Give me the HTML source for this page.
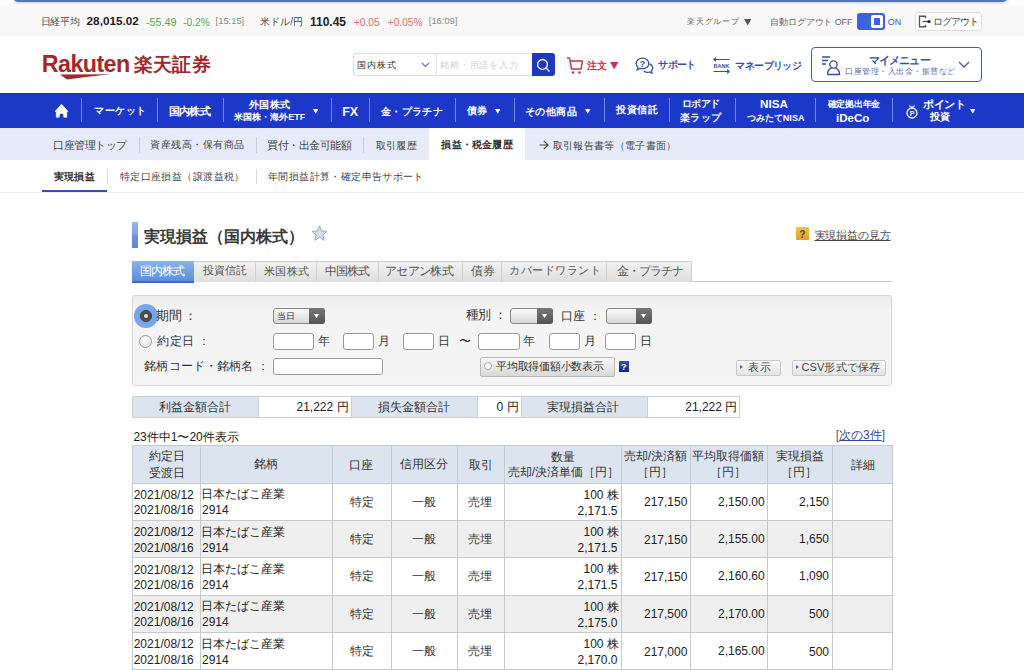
<!DOCTYPE html>
<html lang="ja">
<head>
<meta charset="utf-8">
<title>実現損益</title>
<style>
*{box-sizing:border-box;margin:0;padding:0}
html,body{width:1024px;height:670px;overflow:hidden;background:#fff;font-family:"Liberation Sans",sans-serif;color:#333;position:relative}
.t{position:absolute;white-space:nowrap}
.r{position:absolute}
</style>
</head>
<body>
<div class="r" style="left:0px;top:0px;width:1024px;height:36.5px;background:linear-gradient(#fdfdfd 3px,#f8f8f8 9px,#f8f8f8 34px,#fcfcfc)"></div>
<div class="r" style="left:13.5px;top:-7px;width:995px;height:9px;background:#5573bb;border-radius:0 0 7px 4px;box-shadow:0 1px 3px rgba(80,110,180,.35)"></div>
<div class="t" style="left:40.70px;top:16.30px;font-size:10px;line-height:12px;color:#444;;letter-spacing:-0.30px">日経平均</div>
<div class="t" style="left:86.60px;top:13.30px;font-size:11.73px;line-height:15px;color:#222;font-weight:bold;">28,015.02</div>
<div class="t" style="left:145.90px;top:15.80px;font-size:10.78px;line-height:13px;color:#5aa34a;">-55.49</div>
<div class="t" style="left:183.20px;top:15.80px;font-size:10.19px;line-height:13px;color:#5aa34a;">-0.2%</div>
<div class="t" style="left:215.60px;top:15.30px;font-size:9.35px;line-height:12px;color:#888;">[15:15]</div>
<div class="t" style="left:260.00px;top:16.30px;font-size:10px;line-height:12px;color:#444;;letter-spacing:0.12px">米ドル/円</div>
<div class="t" style="left:310.00px;top:15.30px;font-size:12.0px;line-height:15px;color:#222;font-weight:bold;">110.45</div>
<div class="t" style="left:353.70px;top:15.80px;font-size:10.34px;line-height:13px;color:#e06a70;">+0.05</div>
<div class="t" style="left:387.80px;top:15.80px;font-size:10.15px;line-height:13px;color:#e06a70;">+0.05%</div>
<div class="t" style="left:428.80px;top:15.30px;font-size:9.35px;line-height:12px;color:#888;">[16:09]</div>
<div class="t" style="left:686.90px;top:17.30px;font-size:8px;line-height:10px;color:#666;;letter-spacing:0.82px">楽天グループ</div>
<svg class="r" style="left:743.5px;top:18.6125px" width="7.5" height="6.375" viewBox="0 0 7.5 6.375"><path d="M0 0H7.5L3.75 6.375Z" fill="#555"/></svg>
<div class="t" style="left:770.00px;top:16.80px;font-size:9px;line-height:11px;color:#666;;letter-spacing:-0.10px">自動ログアウト OFF</div>
<div class="r" style="left:856.5px;top:13px;width:28.5px;height:16.5px;background:#3c63dd;border-radius:3px"></div>
<div class="r" style="left:870.5px;top:15px;width:12.5px;height:12.5px;background:#fff;border-radius:2px"></div>
<div class="r" style="left:873.5px;top:18px;width:6.5px;height:6.5px;background:#3c63dd"></div>
<div class="t" style="left:887.80px;top:16.80px;font-size:8.89px;line-height:11px;color:#3c5ab8;">ON</div>
<div class="r" style="left:915px;top:12.3px;width:67px;height:19px;background:#fff;border:1px solid #dcdcdc;border-radius:3px"></div>
<svg class="r" style="left:918px;top:15px" width="14" height="13" viewBox="0 0 14 13"><path d="M7.5 3.2V1.2H1.5V11.8H7.5V9.8" fill="none" stroke="#555" stroke-width="1.4"/><path d="M4.5 6.5H10" fill="none" stroke="#555" stroke-width="1.4"/><circle cx="11" cy="6.5" r="1.6" fill="#222"/></svg>
<div class="t" style="left:932.70px;top:15.85px;font-size:10px;line-height:12px;color:#444;;letter-spacing:-0.90px">ログアウト</div>
<div class="t" style="left:41.80px;top:50.40px;font-size:23.32px;line-height:29px;color:#a0292c;font-weight:bold;letter-spacing:-0.6px">Rakuten</div>
<svg class="r" style="left:58px;top:72.5px" width="56" height="7" viewBox="0 0 56 7"><path d="M2 1.5 L52 1.2 Q30 3.5 9 6.5 Z" fill="#a0292c"/></svg>
<div class="t" style="left:133.60px;top:52.50px;font-size:19px;line-height:24px;color:#a0292c;font-weight:bold;;letter-spacing:0.40px">楽天証券</div>
<div class="r" style="left:353px;top:53px;width:84px;height:23px;background:#fff;border:1px solid #dedede;border-right:none;border-radius:3px 0 0 3px"></div>
<div class="t" style="left:357.00px;top:60.00px;font-size:9px;line-height:11px;color:#333;;letter-spacing:0.87px">国内株式</div>
<svg class="r" style="left:421px;top:62px" width="9" height="6" viewBox="0 0 9 6"><path d="M1 1L4.5 4.5L8 1" fill="none" stroke="#6878a8" stroke-width="1.2"/></svg>
<div class="r" style="left:436px;top:53px;width:96px;height:23px;background:#fff;border:1px solid #dedede;border-right:none"></div>
<div class="r" style="left:436px;top:54px;width:1px;height:21px;background:#e4e4e4"></div>
<div class="t" style="left:440.00px;top:59.50px;font-size:9px;line-height:11px;color:#d0d0d0;;letter-spacing:0.86px">銘柄・用語を入力</div>
<div class="r" style="left:531.5px;top:53.2px;width:23.5px;height:23.2px;background:#1e38c0;border-radius:0 3px 3px 0"></div>
<svg class="r" style="left:535px;top:56px" width="17" height="17" viewBox="0 0 17 17"><circle cx="7.5" cy="8.4" r="4.9" fill="none" stroke="#fff" stroke-width="1.3"/><path d="M11 12L14 15" stroke="#fff" stroke-width="1.4" stroke-linecap="round"/></svg>
<svg class="r" style="left:566px;top:56px" width="18" height="19" viewBox="0 0 18 19"><path d="M1 2H3.5L5.5 13H15L16.5 5H4.5" fill="none" stroke="#c8304f" stroke-width="1.4" stroke-linejoin="round"/><circle cx="7" cy="16.5" r="1.3" fill="#c8304f"/><circle cx="13.5" cy="16.5" r="1.3" fill="#c8304f"/></svg>
<div class="t" style="left:587.00px;top:60.00px;font-size:10px;line-height:12px;color:#c8304f;font-weight:bold;">注文</div>
<svg class="r" style="left:610px;top:61.8875px" width="8.5" height="7.225" viewBox="0 0 8.5 7.225"><path d="M0 0H8.5L4.25 7.225Z" fill="#c8304f"/></svg>
<svg class="r" style="left:635px;top:57px" width="19" height="17" viewBox="0 0 19 17"><path d="M7.5 1.2C3.8 1.2 1.2 3.6 1.2 6.5C1.2 8 1.8 9.2 3 10.2L2.2 12.8L5.3 11.4C6 11.7 6.7 11.8 7.5 11.8C11.2 11.8 13.8 9.4 13.8 6.5C13.8 3.6 11.2 1.2 7.5 1.2Z" fill="none" stroke="#3a4ea0" stroke-width="1.3"/><path d="M14.5 6.8C16.6 7.6 17.8 9.2 17.8 11C17.8 12.2 17.2 13.2 16.3 14L16.9 16.1L14.4 15C12.6 15.6 10.3 15.2 8.9 14" fill="none" stroke="#3a4ea0" stroke-width="1.3"/><text x="7.5" y="9.8" font-size="9.5" font-weight="bold" text-anchor="middle" fill="#3a4ea0" font-family="Liberation Sans">?</text></svg>
<div class="t" style="left:658.20px;top:59.00px;font-size:10px;line-height:12px;color:#3a4ea0;font-weight:bold;;letter-spacing:-0.63px">サポート</div>
<svg class="r" style="left:712px;top:57px" width="19" height="17" viewBox="0 0 19 17"><path d="M1.5 2.5H17.5M1.5 2.5L4 0.8M1.5 2.5L4 4.2" fill="none" stroke="#3a4ea0" stroke-width="1.2"/><path d="M1.5 14.5H17.5M17.5 14.5L15 12.8M17.5 14.5L15 16.2" fill="none" stroke="#3a4ea0" stroke-width="1.2"/><text x="9.5" y="10.8" font-size="5.5" font-weight="bold" text-anchor="middle" fill="#3a4ea0" font-family="Liberation Sans">BANK</text></svg>
<div class="t" style="left:735.40px;top:59.50px;font-size:10px;line-height:12px;color:#3a4ea0;font-weight:bold;;letter-spacing:-0.60px">マネーブリッジ</div>
<div class="r" style="left:811.3px;top:47.4px;width:171px;height:34.6px;border:1.5px solid #4c5c9c;border-radius:4px;background:#fff"></div>
<svg class="r" style="left:821px;top:55px" width="20" height="21" viewBox="0 0 20 21"><path d="M1 2H9M1 5.5H7M1 9H5" stroke="#3a4ea0" stroke-width="1.4"/><circle cx="12.5" cy="9.5" r="3.6" fill="none" stroke="#3a4ea0" stroke-width="1.4"/><path d="M6.5 19.5C6.5 15.5 8.5 13.8 10.5 13.2M14.5 13.2C16.5 13.8 18.5 15.5 18.5 19.5H6.5" fill="none" stroke="#3a4ea0" stroke-width="1.4"/></svg>
<div class="t" style="left:868.50px;top:52.80px;font-size:11px;line-height:14px;color:#3a4ea0;font-weight:bold;letter-spacing:-0.8px">マイメニュー</div>
<div class="t" style="left:845.00px;top:67.00px;font-size:8px;line-height:10px;color:#5666a8;letter-spacing:0.5px">口座管理・入出金・振替など</div>
<svg class="r" style="left:958px;top:61px" width="12" height="8" viewBox="0 0 12 8"><path d="M1 1L6 6L11 1" fill="none" stroke="#4c5c9c" stroke-width="1.3"/></svg>
<div class="r" style="left:0px;top:93px;width:1024px;height:35px;background:#1c38c8"></div>
<div class="r" style="left:0px;top:93px;width:1024px;height:1px;background:#1b30a8"></div>
<div class="r" style="left:81px;top:98px;width:1px;height:24px;background:#6f88f0"></div>
<div class="r" style="left:157px;top:98px;width:1px;height:24px;background:#6f88f0"></div>
<div class="r" style="left:222.5px;top:98px;width:1px;height:24px;background:#6f88f0"></div>
<div class="r" style="left:331px;top:98px;width:1px;height:24px;background:#6f88f0"></div>
<div class="r" style="left:369px;top:98px;width:1px;height:24px;background:#6f88f0"></div>
<div class="r" style="left:455px;top:98px;width:1px;height:24px;background:#6f88f0"></div>
<div class="r" style="left:513.5px;top:98px;width:1px;height:24px;background:#6f88f0"></div>
<div class="r" style="left:603.5px;top:98px;width:1px;height:24px;background:#6f88f0"></div>
<div class="r" style="left:669px;top:98px;width:1px;height:24px;background:#6f88f0"></div>
<div class="r" style="left:734.5px;top:98px;width:1px;height:24px;background:#6f88f0"></div>
<div class="r" style="left:815px;top:98px;width:1px;height:24px;background:#6f88f0"></div>
<div class="r" style="left:891.5px;top:98px;width:1px;height:24px;background:#6f88f0"></div>
<svg class="r" style="left:54px;top:103px" width="16" height="16" viewBox="0 0 16 16"><path d="M7.5 1.2L1 8.5H2.3V14.2H5.3V12.4A2.2 2.2 0 0 1 9.7 12.4V14.2H12.8V8.5H14.1Z" fill="#fff" stroke="#fff" stroke-width="0.6" stroke-linejoin="round"/></svg>
<div class="t" style="left:94.20px;top:105.40px;font-size:10px;line-height:12px;color:#fff;font-weight:bold;;letter-spacing:0.45px">マーケット</div>
<div class="t" style="left:168.80px;top:103.90px;font-size:11px;line-height:14px;color:#fff;font-weight:bold;;letter-spacing:-0.67px">国内株式</div>
<div class="t" style="left:248.90px;top:98.50px;font-size:10px;line-height:12px;color:#fff;font-weight:bold;;letter-spacing:0.53px">外国株式</div>
<div class="t" style="left:234.30px;top:112.40px;font-size:9px;line-height:11px;color:#fff;font-weight:bold;;letter-spacing:-0.01px">米国株・海外ETF</div>
<svg class="r" style="left:312.5px;top:109.1625px" width="5.5" height="4.675" viewBox="0 0 5.5 4.675"><path d="M0 0H5.5L2.75 4.675Z" fill="#fff"/></svg>
<div class="t" style="left:342.20px;top:103.90px;font-size:12.58px;line-height:16px;color:#fff;font-weight:bold;">FX</div>
<div class="t" style="left:380.70px;top:106.40px;font-size:10px;line-height:12px;color:#fff;font-weight:bold;;letter-spacing:0.42px">金・プラチナ</div>
<div class="t" style="left:467.00px;top:105.40px;font-size:10px;line-height:12px;color:#fff;font-weight:bold;;letter-spacing:0.30px">債券</div>
<svg class="r" style="left:495.3px;top:109.1625px" width="5.5" height="4.675" viewBox="0 0 5.5 4.675"><path d="M0 0H5.5L2.75 4.675Z" fill="#fff"/></svg>
<div class="t" style="left:524.70px;top:105.90px;font-size:10px;line-height:12px;color:#fff;font-weight:bold;;letter-spacing:0.57px">その他商品</div>
<svg class="r" style="left:585.3px;top:109.1625px" width="5.5" height="4.675" viewBox="0 0 5.5 4.675"><path d="M0 0H5.5L2.75 4.675Z" fill="#fff"/></svg>
<div class="t" style="left:616.40px;top:103.80px;font-size:10px;line-height:12px;color:#fff;font-weight:bold;;letter-spacing:0.47px">投資信託</div>
<div class="t" style="left:682.00px;top:98.20px;font-size:10px;line-height:12px;color:#fff;font-weight:bold;;letter-spacing:-0.67px">ロボアド</div>
<div class="t" style="left:680.00px;top:111.80px;font-size:10px;line-height:12px;color:#fff;font-weight:bold;;letter-spacing:0.30px">楽ラップ</div>
<div class="t" style="left:760.00px;top:95.70px;font-size:11.7px;line-height:15px;color:#fff;font-weight:bold;">NISA</div>
<div class="t" style="left:746.50px;top:112.70px;font-size:9px;line-height:11px;color:#fff;font-weight:bold;;letter-spacing:0.07px">つみたてNISA</div>
<div class="t" style="left:827.70px;top:99.20px;font-size:9px;line-height:11px;color:#fff;font-weight:bold;;letter-spacing:-0.24px">確定拠出年金</div>
<div class="t" style="left:836.00px;top:110.50px;font-size:11.56px;line-height:14px;color:#fff;font-weight:bold;">iDeCo</div>
<svg class="r" style="left:905px;top:104px" width="14" height="15" viewBox="0 0 14 15"><path d="M4.5 1.5L7 4L9.5 1.5" fill="none" stroke="#fff" stroke-width="1.2"/><circle cx="7" cy="9" r="5" fill="none" stroke="#fff" stroke-width="1.3"/><text x="7" y="11.5" font-size="7" font-weight="bold" text-anchor="middle" fill="#fff" font-family="Liberation Sans">P</text></svg>
<div class="t" style="left:923.40px;top:97.10px;font-size:11px;line-height:14px;color:#fff;font-weight:bold;;letter-spacing:-0.47px">ポイント</div>
<div class="t" style="left:930.40px;top:111.20px;font-size:10px;line-height:12px;color:#fff;font-weight:bold;">投資</div>
<svg class="r" style="left:969.5px;top:109.1625px" width="5.5" height="4.675" viewBox="0 0 5.5 4.675"><path d="M0 0H5.5L2.75 4.675Z" fill="#fff"/></svg>
<div class="r" style="left:0px;top:128px;width:1024px;height:32px;background:#e6eaf9"></div>
<div class="r" style="left:429px;top:128px;width:96px;height:32px;background:#fff"></div>
<div class="r" style="left:138.5px;top:137px;width:1px;height:16px;background:#c8cede"></div>
<div class="r" style="left:255.5px;top:137px;width:1px;height:16px;background:#c8cede"></div>
<div class="r" style="left:362.5px;top:137px;width:1px;height:16px;background:#c8cede"></div>
<div class="t" style="left:53.00px;top:138.30px;font-size:11px;line-height:14px;color:#444;;letter-spacing:-0.50px">口座管理トップ</div>
<div class="t" style="left:150.00px;top:139.30px;font-size:10px;line-height:12px;color:#444;;letter-spacing:0.50px">資産残高・保有商品</div>
<div class="t" style="left:267.00px;top:137.80px;font-size:11px;line-height:14px;color:#444;;letter-spacing:-0.43px">買付・出金可能額</div>
<div class="t" style="left:375.90px;top:139.80px;font-size:10px;line-height:12px;color:#444;;letter-spacing:0.27px">取引履歴</div>
<div class="t" style="left:441.30px;top:139.30px;font-size:10px;line-height:12px;color:#333;font-weight:bold;;letter-spacing:0.23px">損益・税金履歴</div>
<svg class="r" style="left:539px;top:139.5px" width="10" height="10" viewBox="0 0 10 10"><path d="M0.5 5H9M4.8 0.8L9 5L4.8 9.2" fill="none" stroke="#444" stroke-width="1.2"/></svg>
<div class="t" style="left:552.60px;top:139.80px;font-size:10px;line-height:12px;color:#444;;letter-spacing:0.35px">取引報告書等（電子書面）</div>
<div class="r" style="left:0px;top:192px;width:1024px;height:1px;background:#ececec"></div>
<div class="r" style="left:41.5px;top:190.3px;width:65.6px;height:2.2px;background:#3a4fa8"></div>
<div class="r" style="left:106.5px;top:169px;width:1px;height:15px;background:#d8d8d8"></div>
<div class="r" style="left:255.5px;top:169px;width:1px;height:15px;background:#d8d8d8"></div>
<div class="t" style="left:54.00px;top:170.75px;font-size:10px;line-height:12px;color:#333;font-weight:bold;;letter-spacing:0.23px">実現損益</div>
<div class="t" style="left:119.70px;top:170.75px;font-size:10px;line-height:12px;color:#444;;letter-spacing:0.43px">特定口座損益（譲渡益税）</div>
<div class="t" style="left:268.00px;top:170.75px;font-size:10px;line-height:12px;color:#444;;letter-spacing:0.39px">年間損益計算・確定申告サポート</div>
<div class="r" style="left:132px;top:222px;width:5.8px;height:25.8px;background:linear-gradient(#93b5e8,#80a6de 48%,#6c95d7 52%,#5d87cf)"></div>
<div class="t" style="left:143.90px;top:226.80px;font-size:16px;line-height:20px;color:#3a3a3a;font-weight:bold;;letter-spacing:-0.03px">実現損益（国内株式）</div>
<svg class="r" style="left:311px;top:225px" width="17" height="17" viewBox="0 0 17 17"><path d="M8.5 1L10.7 6.1L16 6.4L11.9 9.9L13.2 15.3L8.5 12.4L3.8 15.3L5.1 9.9L1 6.4L6.3 6.1Z" fill="#d7dfe8" stroke="#9aaabd" stroke-width="1"/></svg>
<div class="r" style="left:796px;top:227.3px;width:13.4px;height:12.5px;background:linear-gradient(#f5c24a,#e2a020);border-radius:1px"></div>
<div class="t" style="left:799.20px;top:228.50px;font-size:10px;line-height:12px;color:#444;font-weight:bold;">?</div>
<div class="t" style="left:814.50px;top:228.30px;font-size:11px;line-height:14px;color:#444;text-decoration:underline;letter-spacing:-0.15px">実現損益の見方</div>
<div class="r" style="left:132px;top:281px;width:760px;height:1px;background:#c8c8c8"></div>
<div class="r" style="left:132px;top:260.5px;width:62px;height:22px;background:linear-gradient(#8ab4ea,#5a8fd8);border-bottom:2px solid #3f6cb8"></div>
<div class="t" style="left:140.00px;top:263.90px;font-size:12px;line-height:15px;color:#fff;;letter-spacing:-1.00px">国内株式</div>
<div class="r" style="left:194px;top:260.5px;width:61.5px;height:21px;background:linear-gradient(#f2f2f2,#dedede);border:1px solid #d0d0d0;border-left:none;border-bottom:none"></div>
<div class="t" style="left:202.80px;top:263.40px;font-size:11px;line-height:14px;color:#555;;letter-spacing:0.07px">投資信託</div>
<div class="r" style="left:255.5px;top:260.5px;width:61.5px;height:21px;background:linear-gradient(#f2f2f2,#dedede);border:1px solid #d0d0d0;border-left:none;border-bottom:none"></div>
<div class="t" style="left:264.20px;top:263.90px;font-size:11px;line-height:14px;color:#555;;letter-spacing:0.17px">米国株式</div>
<div class="r" style="left:317px;top:260.5px;width:61.5px;height:21px;background:linear-gradient(#f2f2f2,#dedede);border:1px solid #d0d0d0;border-left:none;border-bottom:none"></div>
<div class="t" style="left:324.60px;top:264.40px;font-size:12px;line-height:15px;color:#555;;letter-spacing:-0.70px">中国株式</div>
<div class="r" style="left:378.5px;top:260.5px;width:84.5px;height:21px;background:linear-gradient(#f2f2f2,#dedede);border:1px solid #d0d0d0;border-left:none;border-bottom:none"></div>
<div class="t" style="left:385.00px;top:264.40px;font-size:12px;line-height:15px;color:#555;;letter-spacing:-0.65px">アセアン株式</div>
<div class="r" style="left:463px;top:260.5px;width:39px;height:21px;background:linear-gradient(#f2f2f2,#dedede);border:1px solid #d0d0d0;border-left:none;border-bottom:none"></div>
<div class="t" style="left:471.00px;top:263.90px;font-size:12px;line-height:15px;color:#555;;letter-spacing:-0.40px">債券</div>
<div class="r" style="left:502px;top:260.5px;width:105px;height:21px;background:linear-gradient(#f2f2f2,#dedede);border:1px solid #d0d0d0;border-left:none;border-bottom:none"></div>
<div class="t" style="left:509.00px;top:263.40px;font-size:11px;line-height:14px;color:#555;;letter-spacing:0.57px">カバードワラント</div>
<div class="r" style="left:607px;top:260.5px;width:85px;height:21px;background:linear-gradient(#f2f2f2,#dedede);border:1px solid #d0d0d0;border-left:none;border-bottom:none"></div>
<div class="t" style="left:616.60px;top:264.40px;font-size:12px;line-height:15px;color:#555;;letter-spacing:-0.92px">金・プラチナ</div>
<div class="r" style="left:132px;top:295px;width:760px;height:91px;background:linear-gradient(#ececec,#f4f4f4 14px,#f5f5f5);border:1px solid #d6d6d6;border-radius:3px"></div>
<div class="r" style="left:133.5px;top:303.5px;width:24px;height:24px;background:#77a5ea;border-radius:50%"></div>
<div class="r" style="left:139.5px;top:309.5px;width:12px;height:12px;background:radial-gradient(circle,#ddd 0 1.5px,#444 2.5px,#666 6px);border-radius:50%;border:1px solid #333"></div>
<div class="t" style="left:156.20px;top:307.50px;font-size:13px;line-height:16px;color:#333;;letter-spacing:-0.53px">期間 ：</div>
<div class="r" style="left:139px;top:335px;width:13px;height:13px;background:radial-gradient(circle at 50% 35%,#fff,#ddd);border:1px solid #999;border-radius:50%"></div>
<div class="t" style="left:157.20px;top:334.30px;font-size:12px;line-height:15px;color:#333;;letter-spacing:0.33px">約定日 ：</div>
<div class="t" style="left:144.30px;top:359.10px;font-size:12px;line-height:15px;color:#333;;letter-spacing:0.13px">銘柄コード・銘柄名 ：</div>
<div class="r" style="left:273px;top:308px;width:52px;height:16px;background:linear-gradient(#fafafa,#d8d8d8);border:1px solid #888;border-radius:3px"></div>
<div class="r" style="left:309px;top:308px;width:16px;height:16px;background:linear-gradient(#777,#555);border-radius:0 3px 3px 0"></div>
<svg class="r" style="left:314px;top:314.375px" width="5" height="4.25" viewBox="0 0 5 4.25"><path d="M0 0H5L2.5 4.25Z" fill="#fff"/></svg>
<div class="t" style="left:277.00px;top:311.00px;font-size:9px;line-height:11px;color:#333;">当日</div>
<div class="t" style="left:465.50px;top:307.00px;font-size:13px;line-height:16px;color:#333;;letter-spacing:-0.50px">種別 ：</div>
<div class="r" style="left:509.5px;top:308px;width:43px;height:16px;background:linear-gradient(#fafafa,#d8d8d8);border:1px solid #888;border-radius:3px"></div>
<div class="r" style="left:536.5px;top:308px;width:16px;height:16px;background:linear-gradient(#777,#555);border-radius:0 3px 3px 0"></div>
<svg class="r" style="left:541.5px;top:314.375px" width="5.0" height="4.25" viewBox="0 0 5.0 4.25"><path d="M0 0H5.0L2.5 4.25Z" fill="#fff"/></svg>
<div class="t" style="left:560.70px;top:308.50px;font-size:12px;line-height:15px;color:#333;;letter-spacing:0.30px">口座 ：</div>
<div class="r" style="left:605.5px;top:308px;width:46px;height:16px;background:linear-gradient(#fafafa,#d8d8d8);border:1px solid #888;border-radius:3px"></div>
<div class="r" style="left:635.5px;top:308px;width:16px;height:16px;background:linear-gradient(#777,#555);border-radius:0 3px 3px 0"></div>
<svg class="r" style="left:640.5px;top:314.375px" width="5.0" height="4.25" viewBox="0 0 5.0 4.25"><path d="M0 0H5.0L2.5 4.25Z" fill="#fff"/></svg>
<div class="r" style="left:273px;top:332.5px;width:41px;height:17px;background:#fff;border:1px solid #999;border-radius:3px"></div>
<div class="t" style="left:318.40px;top:334.30px;font-size:11.5px;line-height:14px;color:#333;">年</div>
<div class="r" style="left:342.5px;top:332.5px;width:31.5px;height:17px;background:#fff;border:1px solid #999;border-radius:3px"></div>
<div class="t" style="left:378.00px;top:333.80px;font-size:11.5px;line-height:14px;color:#333;">月</div>
<div class="r" style="left:402.5px;top:332.5px;width:31.5px;height:17px;background:#fff;border:1px solid #999;border-radius:3px"></div>
<div class="t" style="left:438.20px;top:333.80px;font-size:11.5px;line-height:14px;color:#333;">日</div>
<div class="t" style="left:458.50px;top:334.30px;font-size:11.5px;line-height:14px;color:#333;">〜</div>
<div class="r" style="left:477.5px;top:332.5px;width:42px;height:17px;background:#fff;border:1px solid #999;border-radius:3px"></div>
<div class="t" style="left:523.20px;top:334.30px;font-size:11.5px;line-height:14px;color:#333;">年</div>
<div class="r" style="left:548.5px;top:332.5px;width:31.5px;height:17px;background:#fff;border:1px solid #999;border-radius:3px"></div>
<div class="t" style="left:584.00px;top:333.80px;font-size:11.5px;line-height:14px;color:#333;">月</div>
<div class="r" style="left:605px;top:332.5px;width:31px;height:17px;background:#fff;border:1px solid #999;border-radius:3px"></div>
<div class="t" style="left:640.00px;top:333.80px;font-size:11.5px;line-height:14px;color:#333;">日</div>
<div class="r" style="left:273px;top:358px;width:110px;height:17px;background:#fff;border:1px solid #999;border-radius:3px"></div>
<div class="r" style="left:479.5px;top:356.5px;width:135.5px;height:20px;background:linear-gradient(#f8f8f8,#d9d9d9);border:1px solid #bbb;border-radius:2px"></div>
<div class="r" style="left:484px;top:362px;width:8px;height:8px;background:#fff;border:1px solid #aaa;border-radius:50%"></div>
<div class="t" style="left:496.00px;top:358.90px;font-size:11px;line-height:14px;color:#333;;letter-spacing:-0.22px">平均取得価額小数表示</div>
<div class="r" style="left:619px;top:361px;width:10px;height:11px;background:linear-gradient(#3b4fb8,#15237a)"></div>
<div class="t" style="left:621.00px;top:361.50px;font-size:9px;line-height:11px;color:#fff;font-weight:bold;">?</div>
<div class="r" style="left:736px;top:359.5px;width:45px;height:16px;background:linear-gradient(#fafafa,#e2e2e2);border:1px solid #c8c8c8;border-radius:2px"></div>
<svg class="r" style="left:740px;top:365px" width="3" height="4" viewBox="0 0 3 4"><path d="M0 0L3 2L0 4Z" fill="#3d6db5"/></svg>
<div class="t" style="left:748.00px;top:360.00px;font-size:11px;line-height:14px;color:#444;;letter-spacing:0.60px">表示</div>
<div class="r" style="left:791.5px;top:359.5px;width:94px;height:16px;background:linear-gradient(#fafafa,#e2e2e2);border:1px solid #c8c8c8;border-radius:2px"></div>
<svg class="r" style="left:795.5px;top:365px" width="3" height="4" viewBox="0 0 3 4"><path d="M0 0L3 2L0 4Z" fill="#3d6db5"/></svg>
<div class="t" style="left:801.50px;top:359.50px;font-size:11px;line-height:14px;color:#444;;letter-spacing:0.11px">CSV形式で保存</div>
<div class="r" style="left:132px;top:396px;width:608px;height:22px;background:#fff"></div>
<div class="r" style="left:132px;top:396px;width:126px;height:22px;background:#dce5ef"></div>
<div class="r" style="left:351px;top:396px;width:126px;height:22px;background:#dce5ef"></div>
<div class="r" style="left:521px;top:396px;width:126px;height:22px;background:#dce5ef"></div>
<div class="r" style="left:132px;top:396px;width:608px;height:1px;background:#c9d0d8"></div>
<div class="r" style="left:132px;top:417px;width:608px;height:1px;background:#c9d0d8"></div>
<div class="r" style="left:132px;top:396px;width:1px;height:22px;background:#c9d0d8"></div>
<div class="r" style="left:258px;top:396px;width:1px;height:22px;background:#c9d0d8"></div>
<div class="r" style="left:351px;top:396px;width:1px;height:22px;background:#c9d0d8"></div>
<div class="r" style="left:477px;top:396px;width:1px;height:22px;background:#c9d0d8"></div>
<div class="r" style="left:521px;top:396px;width:1px;height:22px;background:#c9d0d8"></div>
<div class="r" style="left:647px;top:396px;width:1px;height:22px;background:#c9d0d8"></div>
<div class="r" style="left:739px;top:396px;width:1px;height:22px;background:#c9d0d8"></div>
<div class="t" style="left:159.00px;top:400.20px;font-size:12px;line-height:15px;color:#333;">利益金額合計</div>
<div class="t" style="left:296.50px;top:399.70px;font-size:12px;line-height:15px;color:#222;">21,222 円</div>
<div class="t" style="left:377.50px;top:400.20px;font-size:12px;line-height:15px;color:#333;">損失金額合計</div>
<div class="t" style="left:496.50px;top:399.70px;font-size:12px;line-height:15px;color:#222;">0 円</div>
<div class="t" style="left:547.27px;top:400.20px;font-size:12px;line-height:15px;color:#333;">実現損益合計</div>
<div class="t" style="left:685.25px;top:399.70px;font-size:12px;line-height:15px;color:#222;">21,222 円</div>
<div class="t" style="left:133.40px;top:429.90px;font-size:12px;line-height:15px;color:#222;">23件中1〜20件表示</div>
<div class="t" style="left:835.70px;top:427.80px;font-size:12px;line-height:15px;color:#555;">[<span style="color:#3344aa;text-decoration:underline">次の3件</span>]</div>
<div class="r" style="left:132px;top:445px;width:760px;height:37.5px;background:#dce5ef"></div>
<div class="r" style="left:132px;top:482.5px;width:760px;height:37.5px;background:#ffffff"></div>
<div class="r" style="left:132px;top:520px;width:760px;height:37px;background:#efefef"></div>
<div class="r" style="left:132px;top:557px;width:760px;height:37.5px;background:#ffffff"></div>
<div class="r" style="left:132px;top:594.5px;width:760px;height:37.5px;background:#efefef"></div>
<div class="r" style="left:132px;top:632px;width:760px;height:37px;background:#ffffff"></div>
<div class="r" style="left:132px;top:445px;width:760px;height:1px;background:#c5cacf"></div>
<div class="r" style="left:132px;top:482.5px;width:760px;height:1px;background:#c5cacf"></div>
<div class="r" style="left:132px;top:520px;width:760px;height:1px;background:#c5cacf"></div>
<div class="r" style="left:132px;top:557px;width:760px;height:1px;background:#c5cacf"></div>
<div class="r" style="left:132px;top:594.5px;width:760px;height:1px;background:#c5cacf"></div>
<div class="r" style="left:132px;top:632px;width:760px;height:1px;background:#c5cacf"></div>
<div class="r" style="left:132px;top:669px;width:760px;height:1px;background:#c5cacf"></div>
<div class="r" style="left:132px;top:445px;width:1px;height:225px;background:#c5cacf"></div>
<div class="r" style="left:200px;top:445px;width:1px;height:225px;background:#c5cacf"></div>
<div class="r" style="left:331.5px;top:445px;width:1px;height:225px;background:#c5cacf"></div>
<div class="r" style="left:391px;top:445px;width:1px;height:225px;background:#c5cacf"></div>
<div class="r" style="left:456.5px;top:445px;width:1px;height:225px;background:#c5cacf"></div>
<div class="r" style="left:504px;top:445px;width:1px;height:225px;background:#c5cacf"></div>
<div class="r" style="left:621px;top:445px;width:1px;height:225px;background:#c5cacf"></div>
<div class="r" style="left:689.5px;top:445px;width:1px;height:225px;background:#c5cacf"></div>
<div class="r" style="left:766.5px;top:445px;width:1px;height:225px;background:#c5cacf"></div>
<div class="r" style="left:832px;top:445px;width:1px;height:225px;background:#c5cacf"></div>
<div class="r" style="left:891.5px;top:445px;width:1px;height:225px;background:#c5cacf"></div>
<div class="t" style="left:149.00px;top:449.40px;font-size:12px;line-height:15px;color:#333;">約定日</div>
<div class="t" style="left:148.50px;top:465.90px;font-size:12px;line-height:15px;color:#333;">受渡日</div>
<div class="t" style="left:254.25px;top:456.90px;font-size:12px;line-height:15px;color:#333;">銘柄</div>
<div class="t" style="left:348.75px;top:457.90px;font-size:12px;line-height:15px;color:#333;">口座</div>
<div class="t" style="left:400.30px;top:456.90px;font-size:12px;line-height:15px;color:#333;">信用区分</div>
<div class="t" style="left:468.80px;top:457.90px;font-size:12px;line-height:15px;color:#333;">取引</div>
<div class="t" style="left:550.95px;top:449.90px;font-size:12px;line-height:15px;color:#333;">数量</div>
<div class="t" style="left:507.80px;top:465.40px;font-size:12px;line-height:15px;color:#333;">売却/決済単価［円］</div>
<div class="t" style="left:623.85px;top:449.40px;font-size:12px;line-height:15px;color:#333;">売却/決済額</div>
<div class="t" style="left:637.25px;top:464.90px;font-size:12px;line-height:15px;color:#333;">［円］</div>
<div class="t" style="left:691.65px;top:449.40px;font-size:12px;line-height:15px;color:#333;">平均取得価額</div>
<div class="t" style="left:710.00px;top:464.90px;font-size:12px;line-height:15px;color:#333;">［円］</div>
<div class="t" style="left:775.55px;top:449.40px;font-size:12px;line-height:15px;color:#333;">実現損益</div>
<div class="t" style="left:781.25px;top:464.90px;font-size:12px;line-height:15px;color:#333;">［円］</div>
<div class="t" style="left:850.55px;top:457.90px;font-size:12px;line-height:15px;color:#333;">詳細</div>
<div class="t" style="left:133.70px;top:488.05px;font-size:12px;line-height:15px;color:#222;">2021/08/12</div>
<div class="t" style="left:133.70px;top:503.45px;font-size:12px;line-height:15px;color:#222;">2021/08/16</div>
<div class="t" style="left:201.20px;top:487.25px;font-size:12px;line-height:15px;color:#222;">日本たばこ産業</div>
<div class="t" style="left:202.00px;top:503.45px;font-size:12px;line-height:15px;color:#222;">2914</div>
<div class="t" style="left:349.50px;top:494.75px;font-size:12px;line-height:15px;color:#333;">特定</div>
<div class="t" style="left:412.00px;top:494.75px;font-size:12px;line-height:15px;color:#333;">一般</div>
<div class="t" style="left:468.00px;top:494.75px;font-size:12px;line-height:15px;color:#333;">売埋</div>
<div class="t" style="left:583.50px;top:487.75px;font-size:12px;line-height:15px;color:#222;">100 株</div>
<div class="t" style="left:577.50px;top:503.55px;font-size:12px;line-height:15px;color:#222;">2,171.5</div>
<div class="t" style="left:644.00px;top:495.25px;font-size:12px;line-height:15px;color:#222;">217,150</div>
<div class="t" style="left:718.00px;top:494.75px;font-size:12px;line-height:15px;color:#222;">2,150.00</div>
<div class="t" style="left:799.00px;top:494.75px;font-size:12px;line-height:15px;color:#222;">2,150</div>
<div class="t" style="left:133.70px;top:525.30px;font-size:12px;line-height:15px;color:#222;">2021/08/12</div>
<div class="t" style="left:133.70px;top:540.70px;font-size:12px;line-height:15px;color:#222;">2021/08/16</div>
<div class="t" style="left:201.20px;top:524.50px;font-size:12px;line-height:15px;color:#222;">日本たばこ産業</div>
<div class="t" style="left:202.00px;top:540.70px;font-size:12px;line-height:15px;color:#222;">2914</div>
<div class="t" style="left:349.50px;top:532.00px;font-size:12px;line-height:15px;color:#333;">特定</div>
<div class="t" style="left:412.00px;top:532.00px;font-size:12px;line-height:15px;color:#333;">一般</div>
<div class="t" style="left:468.00px;top:532.00px;font-size:12px;line-height:15px;color:#333;">売埋</div>
<div class="t" style="left:583.50px;top:525.00px;font-size:12px;line-height:15px;color:#222;">100 株</div>
<div class="t" style="left:577.50px;top:540.80px;font-size:12px;line-height:15px;color:#222;">2,171.5</div>
<div class="t" style="left:644.00px;top:532.50px;font-size:12px;line-height:15px;color:#222;">217,150</div>
<div class="t" style="left:718.00px;top:532.00px;font-size:12px;line-height:15px;color:#222;">2,155.00</div>
<div class="t" style="left:799.00px;top:532.00px;font-size:12px;line-height:15px;color:#222;">1,650</div>
<div class="t" style="left:133.70px;top:562.55px;font-size:12px;line-height:15px;color:#222;">2021/08/12</div>
<div class="t" style="left:133.70px;top:577.95px;font-size:12px;line-height:15px;color:#222;">2021/08/16</div>
<div class="t" style="left:201.20px;top:561.75px;font-size:12px;line-height:15px;color:#222;">日本たばこ産業</div>
<div class="t" style="left:202.00px;top:577.95px;font-size:12px;line-height:15px;color:#222;">2914</div>
<div class="t" style="left:349.50px;top:569.25px;font-size:12px;line-height:15px;color:#333;">特定</div>
<div class="t" style="left:412.00px;top:569.25px;font-size:12px;line-height:15px;color:#333;">一般</div>
<div class="t" style="left:468.00px;top:569.25px;font-size:12px;line-height:15px;color:#333;">売埋</div>
<div class="t" style="left:583.50px;top:562.25px;font-size:12px;line-height:15px;color:#222;">100 株</div>
<div class="t" style="left:577.50px;top:578.05px;font-size:12px;line-height:15px;color:#222;">2,171.5</div>
<div class="t" style="left:644.00px;top:569.75px;font-size:12px;line-height:15px;color:#222;">217,150</div>
<div class="t" style="left:718.00px;top:569.25px;font-size:12px;line-height:15px;color:#222;">2,160.60</div>
<div class="t" style="left:799.00px;top:569.25px;font-size:12px;line-height:15px;color:#222;">1,090</div>
<div class="t" style="left:133.70px;top:600.05px;font-size:12px;line-height:15px;color:#222;">2021/08/12</div>
<div class="t" style="left:133.70px;top:615.45px;font-size:12px;line-height:15px;color:#222;">2021/08/16</div>
<div class="t" style="left:201.20px;top:599.25px;font-size:12px;line-height:15px;color:#222;">日本たばこ産業</div>
<div class="t" style="left:202.00px;top:615.45px;font-size:12px;line-height:15px;color:#222;">2914</div>
<div class="t" style="left:349.50px;top:606.75px;font-size:12px;line-height:15px;color:#333;">特定</div>
<div class="t" style="left:412.00px;top:606.75px;font-size:12px;line-height:15px;color:#333;">一般</div>
<div class="t" style="left:468.00px;top:606.75px;font-size:12px;line-height:15px;color:#333;">売埋</div>
<div class="t" style="left:583.50px;top:599.75px;font-size:12px;line-height:15px;color:#222;">100 株</div>
<div class="t" style="left:577.50px;top:615.55px;font-size:12px;line-height:15px;color:#222;">2,175.0</div>
<div class="t" style="left:644.00px;top:607.25px;font-size:12px;line-height:15px;color:#222;">217,500</div>
<div class="t" style="left:718.00px;top:606.75px;font-size:12px;line-height:15px;color:#222;">2,170.00</div>
<div class="t" style="left:809.00px;top:607.25px;font-size:12px;line-height:15px;color:#222;">500</div>
<div class="t" style="left:133.70px;top:637.30px;font-size:12px;line-height:15px;color:#222;">2021/08/12</div>
<div class="t" style="left:133.70px;top:652.70px;font-size:12px;line-height:15px;color:#222;">2021/08/16</div>
<div class="t" style="left:201.20px;top:636.50px;font-size:12px;line-height:15px;color:#222;">日本たばこ産業</div>
<div class="t" style="left:202.00px;top:652.70px;font-size:12px;line-height:15px;color:#222;">2914</div>
<div class="t" style="left:349.50px;top:644.00px;font-size:12px;line-height:15px;color:#333;">特定</div>
<div class="t" style="left:412.00px;top:644.00px;font-size:12px;line-height:15px;color:#333;">一般</div>
<div class="t" style="left:468.00px;top:644.00px;font-size:12px;line-height:15px;color:#333;">売埋</div>
<div class="t" style="left:583.50px;top:637.00px;font-size:12px;line-height:15px;color:#222;">100 株</div>
<div class="t" style="left:577.50px;top:652.80px;font-size:12px;line-height:15px;color:#222;">2,170.0</div>
<div class="t" style="left:644.00px;top:644.50px;font-size:12px;line-height:15px;color:#222;">217,000</div>
<div class="t" style="left:718.00px;top:644.00px;font-size:12px;line-height:15px;color:#222;">2,165.00</div>
<div class="t" style="left:809.00px;top:644.50px;font-size:12px;line-height:15px;color:#222;">500</div>
</body>
</html>
